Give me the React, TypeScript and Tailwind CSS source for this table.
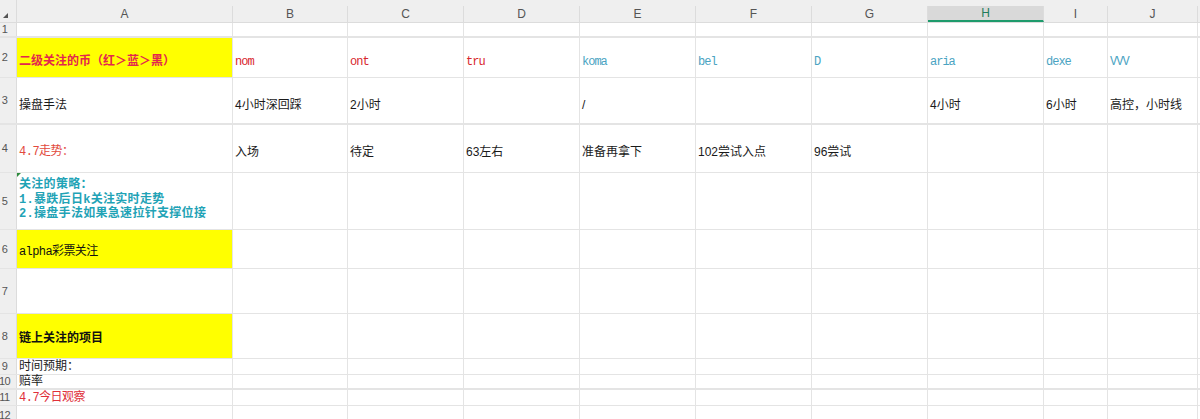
import React from "react";

const SONG = "font-['Liberation_Mono','Noto_Sans_CJK_SC',monospace]";
const SANS = "font-['Liberation_Sans','Noto_Sans_CJK_SC',sans-serif]";

const COLS = ["A", "B", "C", "D", "E", "F", "G", "H", "I", "J"];
const WIDTHS = [
  "w-[216px]",
  "w-[115px]",
  "w-[116px]",
  "w-[116px]",
  "w-[116px]",
  "w-[116px]",
  "w-[116px]",
  "w-[116px]",
  "w-[64px]",
  "w-[90px]",
];

type CellDef = { text: React.ReactNode; cls?: string; bg?: string };
type RowDef = {
  n: number;
  h: string;
  line?: string;
  align?: string;
  cells: Record<number, CellDef>;
};

const red = `${SONG} text-[12px] tracking-[-1px] text-[#d8262e]`;
const teal = `${SONG} text-[12px] tracking-[-1px] text-[#4aa3c2]`;
const plain = `${SANS} text-[12px] text-[#1a1a1a]`;

const ROWS: RowDef[] = [
  { n: 1, h: "h-[15px]", line: "border-b-2", align: "items-center", cells: {} },
  {
    n: 2,
    h: "h-[40px]",
    align: "items-center pt-[8px]",
    cells: {
      0: {
        text: "二级关注的币（红＞蓝＞黑）",
        cls: `${SONG} text-[12px] font-bold text-[#e3264e]`,
        bg: "bg-[#ffff00]",
      },
      1: { text: "nom", cls: red },
      2: { text: "ont", cls: red },
      3: { text: "tru", cls: red },
      4: { text: "koma", cls: teal },
      5: { text: "bel", cls: teal },
      6: { text: "D", cls: teal },
      7: { text: "aria", cls: teal },
      8: { text: "dexe", cls: teal },
      9: { text: "VVV", cls: teal },
    },
  },
  {
    n: 3,
    h: "h-[47px]",
    line: "border-b-2",
    align: "items-center pt-[8px]",
    cells: {
      0: { text: "操盘手法", cls: plain },
      1: { text: "4小时深回踩", cls: plain },
      2: { text: "2小时", cls: plain },
      4: { text: "/", cls: plain },
      7: { text: "4小时", cls: plain },
      8: { text: "6小时", cls: plain },
      9: { text: "高控，小时线", cls: plain },
    },
  },
  {
    n: 4,
    h: "h-[48px]",
    cells: {
      0: { text: "4.7走势：", cls: `${SONG} text-[12px] tracking-[-0.5px] text-[#e2493c]` },
      1: { text: "入场", cls: plain },
      2: { text: "待定", cls: plain },
      3: { text: "63左右", cls: plain },
      4: { text: "准备再拿下", cls: plain },
      5: { text: "102尝试入点", cls: plain },
      6: { text: "96尝试", cls: plain },
    },
  },
  {
    n: 5,
    h: "h-[57px]",
    align: "items-start pt-[5px]",
    cells: {
      0: {
        text: (
          <>
            <div>关注的策略：</div>
            <div>1.暴跌后日k关注实时走势</div>
            <div className="whitespace-nowrap">2.操盘手法如果急速拉针支撑位接</div>
          </>
        ),
        cls: `${SONG} text-[12px] leading-[14.5px] font-bold text-[#1fa3b6] tracking-[0.3px]`,
      },
    },
  },
  {
    n: 6,
    h: "h-[39px]",
    cells: {
      0: {
        text: "alpha彩票关注",
        cls: `${SONG} text-[12px] tracking-[-0.6px] text-[#111]`,
        bg: "bg-[#ffff00]",
      },
    },
  },
  { n: 7, h: "h-[45px]", cells: {} },
  {
    n: 8,
    h: "h-[45px]",
    cells: {
      0: {
        text: "链上关注的项目",
        cls: `${SONG} text-[12px] font-bold text-[#111]`,
        bg: "bg-[#ffff00]",
      },
    },
  },
  {
    n: 9,
    h: "h-[16px]",
    align: "items-center pt-[1px]",
    cells: { 0: { text: "时间预期：", cls: `${SONG} text-[12px] text-[#1a1a1a]` } },
  },
  {
    n: 10,
    h: "h-[15px]",
    line: "border-b-2",
    align: "items-center pt-[1px]",
    cells: { 0: { text: "赔率", cls: `${SONG} text-[12px] text-[#1a1a1a]` } },
  },
  {
    n: 11,
    h: "h-[16px]",
    align: "items-center pt-[1px]",
    cells: { 0: { text: "4.7今日观察", cls: `${SONG} text-[12px] tracking-[-0.5px] text-[#e0303a]` } },
  },
  { n: 12, h: "h-[20px]", align: "items-center", cells: {} },
];

function Row({ row }: { row: RowDef }) {
  return (
    <div className={`flex ${row.h} shrink-0 border-[#e4e4e4] ${row.line ?? "border-b"}`}>
      <div className="w-[17px] shrink-0 overflow-hidden bg-[#efefef] border-r border-[#dcdcdc] flex items-center">
        <span className={`${SANS} w-[13px] -ml-[2px] shrink-0 text-center text-[11px] tracking-[-0.5px] text-[#555]`}>
          {row.n}
        </span>
      </div>
      {COLS.map((c, i) => {
        const cell = row.cells[i];
        return (
          <div
            key={c}
            className={`${WIDTHS[i]} shrink-0 border-r border-[#e4e4e4] flex ${row.align ?? "items-center pt-[6px]"} pl-[2px] whitespace-nowrap overflow-visible relative ${cell?.bg ?? ""}`}
          >
            {row.n === 5 && i === 0 && (
              <span className="absolute left-0 top-0 w-0 h-0 border-t-[4px] border-r-[4px] border-t-[#2e8b3e] border-r-transparent" />
            )}
            {cell && <div className={cell.cls}>{cell.text}</div>}
          </div>
        );
      })}
      <div className="flex-1" />
    </div>
  );
}

export default function App() {
  return (
    <div className="w-[1200px] h-[419px] overflow-hidden bg-white flex flex-col">
      {/* column headers */}
      <div className="flex h-[23px] shrink-0 bg-[#efefef] border-b border-[#dcdcdc]">
        <div className="w-[17px] shrink-0 relative border-r border-[#dcdcdc]">
          <span className="absolute left-[3px] top-[13px] w-0 h-0 border-b-[5px] border-l-[5px] border-b-[#555] border-l-transparent" />
        </div>
        {COLS.map((c, i) => (
          <div key={c} className={`${WIDTHS[i]} shrink-0 pt-[6px] flex`}>
            <div
              className={`flex-1 flex items-center justify-center border-r border-[#dcdcdc] ${SANS} text-[12px] ${
                c === "H"
                  ? "bg-[#d9d9d9] border-b-2 border-b-[#1e9b6c] text-[#1f7d5c]"
                  : "text-[#555]"
              }`}
            >
              {c}
            </div>
          </div>
        ))}
        <div className="flex-1 pt-[6px]" />
      </div>
      {ROWS.map((r) => (
        <Row key={r.n} row={r} />
      ))}
    </div>
  );
}
